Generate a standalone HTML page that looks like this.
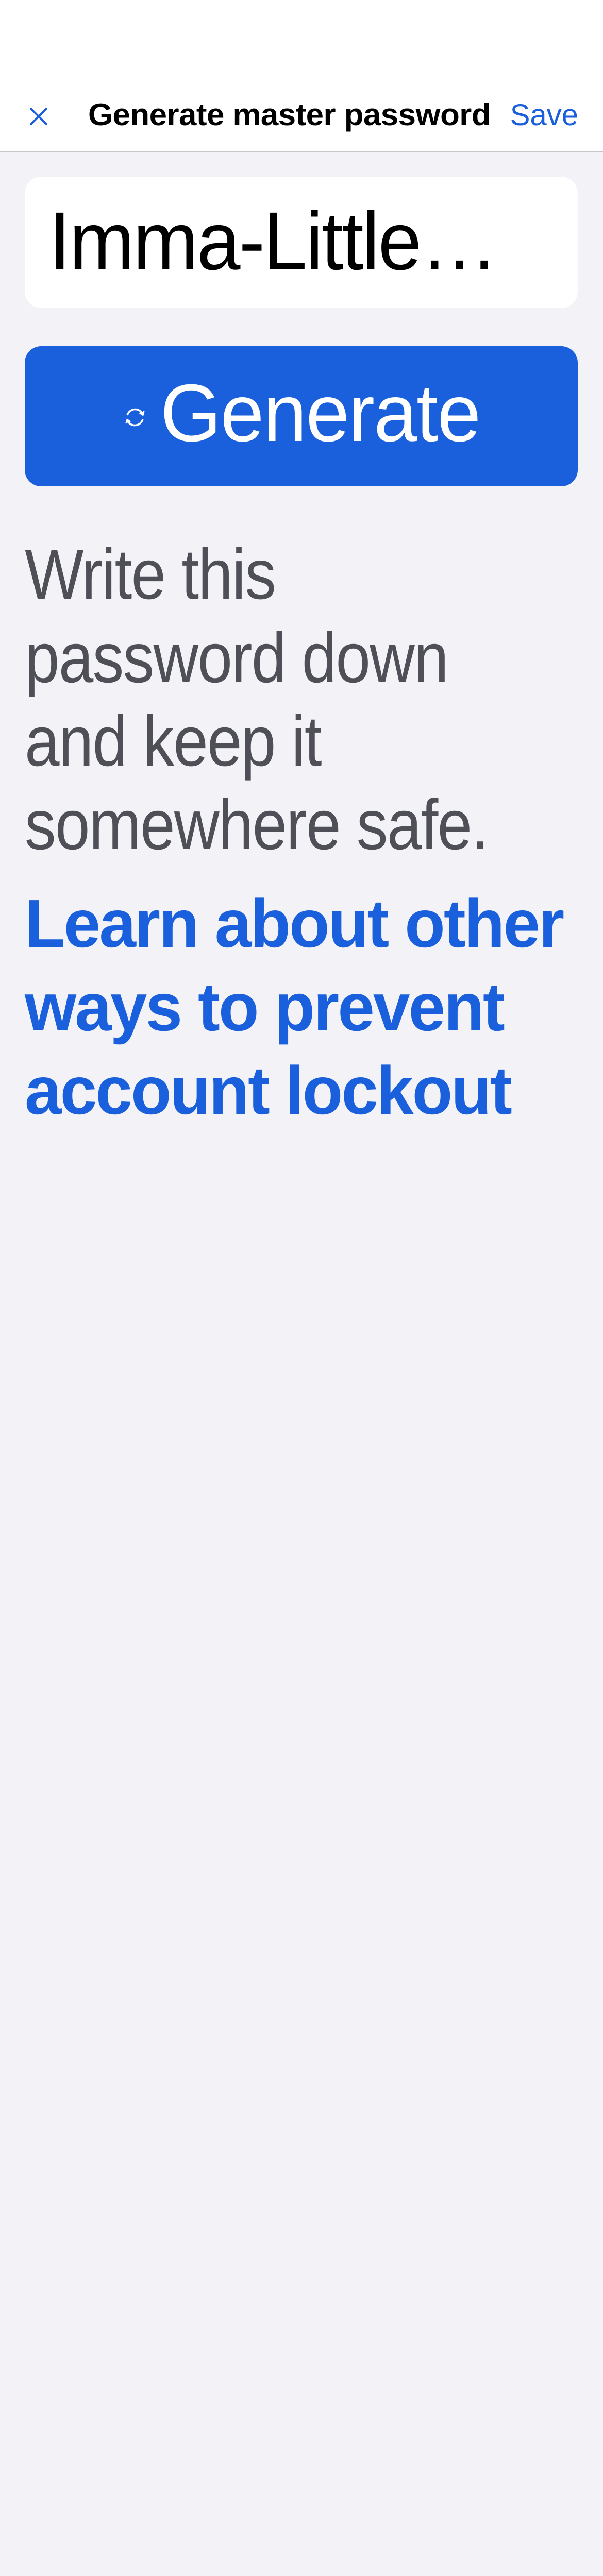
<!DOCTYPE html>
<html><head><meta charset="utf-8"><style>
html,body{margin:0;padding:0;width:1170px;height:5064px;overflow:hidden}
body{background:#f2f2f7;font-family:"Liberation Sans",sans-serif;position:relative}
.hdr{position:absolute;left:0;top:0;width:1170px;height:293px;background:#fff;border-bottom:2px solid #c6c6c8}
.title{position:absolute;left:171px;top:188px;font-size:60px;font-weight:bold;color:#000;white-space:nowrap;letter-spacing:-0.5px;transform:scaleX(1.03);transform-origin:left}
.save{position:absolute;right:48px;top:190px;font-size:58px;color:#1a5fdb}
.box{position:absolute;left:48px;top:343px;width:1073px;height:255px;background:#fff;border-radius:32px}
.pw{position:absolute;left:95px;top:378px;font-size:160px;line-height:180px;color:#000;white-space:nowrap;letter-spacing:-3px;transform:scaleX(0.95);transform-origin:left}
.btn{position:absolute;left:48px;top:672px;width:1073px;height:272px;background:#1a5fdb;border-radius:32px}
.gen{position:absolute;left:311px;top:712px;font-size:158px;line-height:180px;color:#fff;white-space:nowrap;letter-spacing:-2px;transform:scaleX(0.965);transform-origin:left}
.txt{position:absolute;left:48px;top:1034px;font-size:138px;line-height:162px;color:#4f4f58;white-space:nowrap;letter-spacing:-2px;transform:scaleX(0.88);transform-origin:left}
.lnk{position:absolute;left:48px;top:1712px;font-size:132px;line-height:162px;color:#1a5fdb;font-weight:bold;white-space:nowrap;letter-spacing:-3px;transform:scaleX(0.975);transform-origin:left}
</style></head><body>
<div class="hdr">
<svg style="position:absolute;left:55px;top:206px" width="40" height="40" viewBox="0 0 40 40"><path d="M4 4L36 36M36 4L4 36" stroke="#1a5fdb" stroke-width="4" fill="none"/></svg>
<div class="title">Generate master password</div>
<div class="save">Save</div>
</div>
<div class="box"></div>
<div class="pw">Imma-Little…</div>
<div class="btn"></div>
<svg style="position:absolute;left:238px;top:786px" width="48" height="48" viewBox="0 0 48 48" fill="none" stroke="#fff" stroke-width="3.5"><path d="M9 20A16 16 0 0 1 39 18"/><path d="M33 15l6 4 2-7"/><path d="M39 28A16 16 0 0 1 9 30"/><path d="M15 33l-6-4-2 7"/></svg>
<div class="gen">Generate</div>
<div class="txt">Write this<br>password down<br>and keep it<br>somewhere safe.</div>
<div class="lnk">Learn about other<br>ways to prevent<br>account lockout</div>
</body></html>
